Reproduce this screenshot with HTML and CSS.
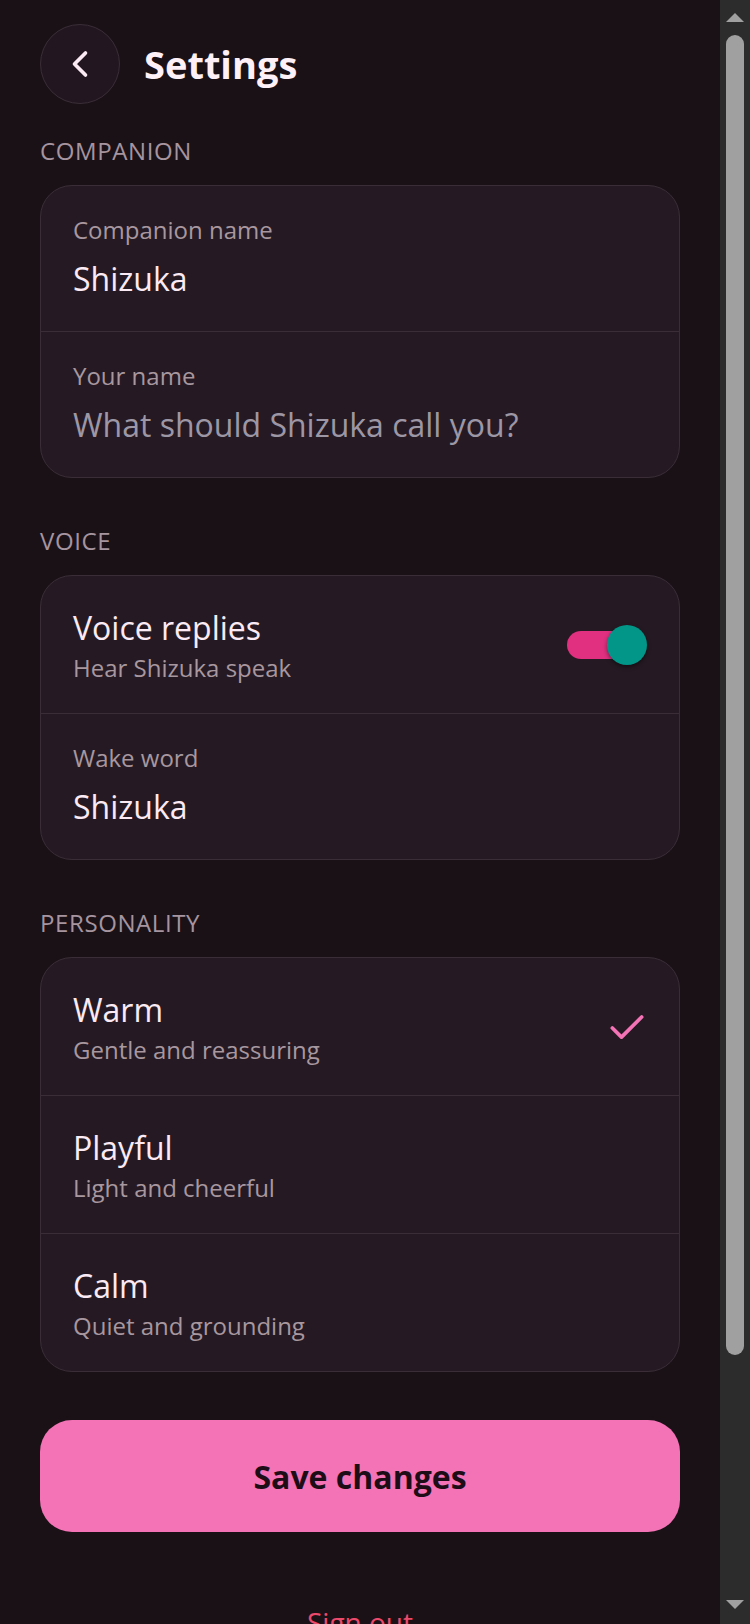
FILE: index.html
```html
<!DOCTYPE html>
<html lang="en">
<head>
<meta charset="utf-8">
<title>Settings</title>
<link rel="stylesheet" href="styles.css">
</head>
<body>
<div class="page">
  <header class="topbar">
    <button class="back-btn" aria-label="Back">
      <svg class="back-icon" viewBox="0 0 24 24" width="44" height="44" fill="none" stroke="currentColor" stroke-width="2" stroke-linecap="round" stroke-linejoin="round"><path d="m15 18-6-6 6-6"/></svg>
    </button>
    <h1 class="title">Settings</h1>
  </header>

  <section class="section">
    <h2 class="section-label">Companion</h2>
    <div class="card">
      <label class="field">
        <span class="field-label">Companion name</span>
        <input class="field-input" type="text" value="Shizuka">
      </label>
      <label class="field">
        <span class="field-label">Your name</span>
        <input class="field-input" type="text" placeholder="What should Shizuka call you?">
      </label>
    </div>
  </section>

  <section class="section">
    <h2 class="section-label">Voice</h2>
    <div class="card">
      <div class="row">
        <div class="row-text">
          <div class="row-title">Voice replies</div>
          <div class="row-sub">Hear Shizuka speak</div>
        </div>
        <span class="switch" role="switch" aria-checked="true">
          <span class="switch-track"></span>
          <span class="switch-thumb"></span>
        </span>
      </div>
      <label class="field">
        <span class="field-label">Wake word</span>
        <input class="field-input" type="text" value="Shizuka">
      </label>
    </div>
  </section>

  <section class="section">
    <h2 class="section-label">Personality</h2>
    <div class="card">
      <div class="row">
        <div class="row-text">
          <div class="row-title">Warm</div>
          <div class="row-sub">Gentle and reassuring</div>
        </div>
        <svg class="check-icon" viewBox="0 0 24 24" width="44" height="44" fill="none" stroke="currentColor" stroke-width="2" stroke-linecap="round" stroke-linejoin="round"><path d="M20 6 9 17l-5-5"/></svg>
      </div>
      <div class="row">
        <div class="row-text">
          <div class="row-title">Playful</div>
          <div class="row-sub">Light and cheerful</div>
        </div>
      </div>
      <div class="row">
        <div class="row-text">
          <div class="row-title">Calm</div>
          <div class="row-sub">Quiet and grounding</div>
        </div>
      </div>
    </div>
  </section>

  <button class="save-btn">Save changes</button>
  <button class="signout-btn">Sign out</button>
</div>

<div class="scrollbar" aria-hidden="true">
  <div class="scroll-btn scroll-btn-up"><span class="arrow arrow-up"></span></div>
  <div class="scroll-track"><div class="scroll-thumb"></div></div>
  <div class="scroll-btn scroll-btn-down"><span class="arrow arrow-down"></span></div>
</div>
</body>
</html>
```

FILE: styles.css
```css
html {
  color-scheme: dark;
  background: #1a1117;
  scrollbar-width: none;
}

body {
  margin: 0 30px 0 0;
  background: #1a1117;
  color: #fbeaf3;
  font-family: "Open Sans", "Noto Sans", sans-serif;
}

.page {
  padding: 24px 40px 240px;
  display: flex;
  flex-direction: column;
}

.topbar {
  display: flex;
  align-items: center;
  gap: 24px;
  height: 80px;
  margin-bottom: 29px;
}

.back-btn {
  width: 80px;
  height: 80px;
  border-radius: 50%;
  border: 1px solid #3a2d37;
  background: #221720;
  color: #fbeaf3;
  display: flex;
  align-items: center;
  justify-content: center;
  padding: 0;
  flex: none;
}

.back-icon {
  display: block;
}

.title {
  margin: 0;
  font-size: 38px;
  line-height: 48px;
  font-weight: 700;
  color: #fdf0f6;
}

.section + .section {
  margin-top: 45px;
}

.section-label {
  margin: 0 0 16px;
  font-size: 24px;
  line-height: 36px;
  font-weight: 400;
  text-transform: uppercase;
  letter-spacing: 0.6px;
  color: #a6949f;
}

.card {
  background: #251a23;
  border: 1px solid #3a2d37;
  border-radius: 32px;
  overflow: hidden;
}

.card > * + * {
  border-top: 1px solid #3a2d37;
}

.field {
  display: flex;
  flex-direction: column;
  padding: 26px 32px 29px;
}

.field-label {
  font-size: 24px;
  line-height: 36px;
  color: #a8979f;
}

.field-input {
  margin-top: 6px;
  height: 48px;
  padding: 0;
  border: none;
  outline: none;
  background: transparent;
  font-family: inherit;
  font-size: 32px;
  color: #fbeaf3;
  width: 100%;
}

.field-input::placeholder {
  color: #9d97a5;
  opacity: 1;
}

.row {
  display: flex;
  align-items: center;
  justify-content: space-between;
  padding: 30px 32px 27px;
}

.row-title {
  font-size: 32px;
  line-height: 44px;
  color: #fbeaf3;
}

.row-sub {
  font-size: 24px;
  line-height: 36px;
  color: #a8979f;
}

.switch {
  position: relative;
  width: 80px;
  height: 40px;
  flex: none;
  margin-top: -2px;
}

.switch-track {
  position: absolute;
  left: 0;
  top: 6px;
  width: 72px;
  height: 28px;
  border-radius: 14px;
  background: #e0307f;
}

.switch-thumb {
  position: absolute;
  right: 0;
  top: 0;
  width: 40px;
  height: 40px;
  border-radius: 50%;
  background: #019688;
  box-shadow: 0 2px 4px rgba(0, 0, 0, 0.45);
}

.check-icon {
  color: #f472b6;
  display: block;
  flex: none;
  margin-right: -2px;
}

.save-btn {
  margin-top: 48px;
  height: 112px;
  border: none;
  border-radius: 32px;
  background: #f472b6;
  color: #1c0d17;
  font-family: inherit;
  font-size: 32px;
  font-weight: 700;
  width: 100%;
}

.signout-btn {
  margin-top: 48px;
  padding: 21px 0;
  border: none;
  background: transparent;
  color: #ec4a6c;
  font-family: inherit;
  font-size: 28px;
  line-height: 42px;
  align-self: center;
}

/* decorative scrollbar, drawn over the right edge */
.scrollbar {
  position: fixed;
  top: 0;
  right: 0;
  bottom: 0;
  width: 30px;
  background: #2c2c2c;
  display: flex;
  flex-direction: column;
}

.scroll-btn {
  height: 30px;
  flex: none;
  display: flex;
  justify-content: center;
  align-items: flex-start;
  box-sizing: border-box;
}

.scroll-btn-up {
  padding-top: 13px;
}

.scroll-btn-down {
  padding-top: 6px;
}

.arrow {
  width: 0;
  height: 0;
  border-left: 9px solid transparent;
  border-right: 9px solid transparent;
}

.arrow-up {
  border-bottom: 9px solid #a0a0a0;
}

.arrow-down {
  border-top: 9px solid #a0a0a0;
}

.scroll-track {
  flex: 1;
  padding: 5px 6px 0;
}

.scroll-thumb {
  height: 1320px;
  border-radius: 9px;
  background: #a0a0a0;
}
```
